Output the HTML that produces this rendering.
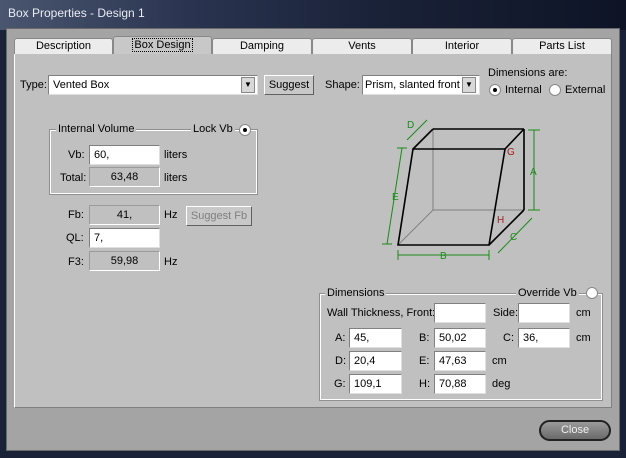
<!DOCTYPE html><html><head><style>
*{margin:0;padding:0;box-sizing:border-box}
body{width:626px;height:458px;background:#1a2238;font-family:"Liberation Sans",sans-serif;font-size:11px;color:#000;position:relative;overflow:hidden}
.a{position:absolute}
.tb{left:0;top:0;width:626px;height:30px;background:linear-gradient(90deg,#4a5670 0%,#2a3450 30%,#1a2238 60%,#0e1426 100%)}
.tt{left:8px;top:6px;color:#e8ecf4;font-size:12px}
.frame{left:6px;top:28px;width:614px;height:423px;background:#a4a4a4;border:1px solid #6a6a6a}
.panel{left:14px;top:53px;width:598px;height:355px;background:#c0c0c0;border:1px solid #fff;border-right-color:#808080;border-bottom-color:#808080}
.tab{top:38px;height:16px;background:#ececec;border:1px solid #888;border-bottom:none;border-radius:3px 3px 0 0;text-align:center;font-size:11px;line-height:14px}
.in{background:#fff;border:1px solid #808080;border-right-color:#e0e0e0;border-bottom-color:#e0e0e0;height:20px;padding-left:4px;line-height:18px}
.ro{background:#c0c0c0;border:1px solid #9a9a9a;border-right-color:#fff;border-bottom-color:#fff;height:20px;text-align:center;line-height:18px}
.btn{background:#c8c8c8;border:1px solid #fff;border-right-color:#606060;border-bottom-color:#606060;text-align:center;line-height:18px;height:20px}
.grp{border:1px solid #fff;outline:1px solid #909090}
.lb{background:#c0c0c0;padding:0 2px}
.rad{width:12px;height:12px;border-radius:50%;background:#fff;border:1px solid #888}
.dot{width:4px;height:4px;border-radius:50%;background:#000;left:3px;top:3px}
.dd{width:14px;height:16px;background:#d8d8d8;border:1px solid #888;font-size:8px;text-align:center;line-height:14px}
</style></head><body>
<div class="a tb"></div>
<div class="a tt">Box Properties - Design 1</div>
<div class="a frame"></div>
<div class="a panel"></div>
<div class="a tab" style="left:14px;width:99px">Description</div>
<div class="a tab" style="left:113px;width:99px;top:36px;height:18px;background:#c8c8c8;border-bottom:none;line-height:16px"><span style="border:1px dotted #000;padding:0 1px">Box Design</span></div>
<div class="a tab" style="left:212px;width:100px">Damping</div>
<div class="a tab" style="left:312px;width:100px">Vents</div>
<div class="a tab" style="left:412px;width:100px">Interior</div>
<div class="a tab" style="left:512px;width:100px">Parts List</div>

<div class="a" style="left:20px;top:79px">Type:</div>
<div class="a in" style="left:48px;top:75px;width:210px">Vented Box</div>
<div class="a dd" style="left:241px;top:77px">▼</div>
<div class="a btn" style="left:264px;top:75px;width:50px">Suggest</div>
<div class="a" style="left:325px;top:79px">Shape:</div>
<div class="a in" style="left:362px;top:75px;width:118px;padding-left:2px">Prism, slanted front</div>
<div class="a dd" style="left:462px;top:77px">▼</div>
<div class="a" style="left:488px;top:67px">Dimensions are:</div>
<div class="a rad" style="left:489px;top:84px"><div class="a dot"></div></div>
<div class="a" style="left:505px;top:84px">Internal</div>
<div class="a rad" style="left:549px;top:84px"></div>
<div class="a" style="left:565px;top:84px">External</div>

<div class="a grp" style="left:50px;top:130px;width:207px;height:64px"></div>
<div class="a lb" style="left:56px;top:123px">Internal Volume</div>
<div class="a lb" style="left:191px;top:123px">Lock Vb</div>
<div class="a rad" style="left:239px;top:124px"><div class="a dot"></div></div>
<div class="a" style="left:68px;top:149px">Vb:</div>
<div class="a in" style="left:89px;top:145px;width:71px">60,</div>
<div class="a" style="left:164px;top:149px">liters</div>
<div class="a" style="left:60px;top:172px">Total:</div>
<div class="a ro" style="left:89px;top:167px;width:71px">63,48</div>
<div class="a" style="left:164px;top:172px">liters</div>
<div class="a" style="left:68px;top:209px">Fb:</div>
<div class="a ro" style="left:89px;top:205px;width:71px">41,</div>
<div class="a" style="left:164px;top:209px">Hz</div>
<div class="a btn" style="left:186px;top:206px;width:66px;color:#808080">Suggest Fb</div>
<div class="a" style="left:66px;top:232px">QL:</div>
<div class="a in" style="left:89px;top:228px;width:71px">7,</div>
<div class="a" style="left:68px;top:256px">F3:</div>
<div class="a ro" style="left:89px;top:251px;width:71px">59,98</div>
<div class="a" style="left:164px;top:256px">Hz</div>

<svg class="a" style="left:370px;top:110px" width="180" height="160" viewBox="0 0 180 160">
<g fill="none" stroke="#808080" stroke-width="1"><line x1="63" y1="19" x2="63" y2="100"/><line x1="63" y1="100" x2="154" y2="100"/><line x1="63" y1="100" x2="28" y2="135"/></g>
<g fill="none" stroke="#000" stroke-width="1.6"><polygon points="43,39 135,39 119,135 28,135"/><line x1="63" y1="19" x2="154" y2="19"/><line x1="63" y1="19" x2="43" y2="39"/><line x1="154" y1="19" x2="135" y2="39"/><line x1="154" y1="19" x2="154" y2="100"/><line x1="154" y1="100" x2="119" y2="135"/></g>
<g stroke="#1a8a1a" stroke-width="1" fill="none"><line x1="37" y1="30" x2="57" y2="10"/><line x1="32" y1="38" x2="17" y2="134"/><line x1="164" y1="20" x2="164" y2="100"/><line x1="28" y1="145" x2="119" y2="145"/><line x1="128" y1="143" x2="162" y2="108"/>
<line x1="158" y1="20" x2="170" y2="20"/><line x1="158" y1="100" x2="170" y2="100"/><line x1="28" y1="140" x2="28" y2="150"/><line x1="119" y1="140" x2="119" y2="150"/><line x1="27" y1="38" x2="37" y2="38"/><line x1="12" y1="134" x2="22" y2="134"/></g>
<g fill="#1a8a1a" font-size="10" font-family="Liberation Sans"><text x="37" y="18">D</text><text x="22" y="90">E</text><text x="160" y="65">A</text><text x="70" y="149">B</text><text x="140" y="130">C</text></g>
<g fill="#a02020" font-size="10" font-family="Liberation Sans"><text x="137" y="45">G</text><text x="127" y="113">H</text></g>
</svg>

<div class="a grp" style="left:320px;top:294px;width:282px;height:106px"></div>
<div class="a lb" style="left:325px;top:287px">Dimensions</div>
<div class="a lb" style="left:516px;top:287px">Override Vb</div>
<div class="a rad" style="left:586px;top:287px"></div>
<div class="a" style="left:327px;top:307px">Wall Thickness, Front:</div>
<div class="a in" style="left:434px;top:303px;width:52px"></div>
<div class="a" style="left:493px;top:307px">Side:</div>
<div class="a in" style="left:518px;top:303px;width:52px"></div>
<div class="a" style="left:576px;top:307px">cm</div>
<div class="a" style="left:335px;top:332px">A:</div><div class="a in" style="left:349px;top:328px;width:53px">45,</div>
<div class="a" style="left:419px;top:332px">B:</div><div class="a in" style="left:434px;top:328px;width:52px">50,02</div>
<div class="a" style="left:503px;top:332px">C:</div><div class="a in" style="left:518px;top:328px;width:52px">36,</div>
<div class="a" style="left:576px;top:332px">cm</div>
<div class="a" style="left:335px;top:355px">D:</div><div class="a in" style="left:349px;top:351px;width:53px">20,4</div>
<div class="a" style="left:419px;top:355px">E:</div><div class="a in" style="left:434px;top:351px;width:52px">47,63</div>
<div class="a" style="left:492px;top:355px">cm</div>
<div class="a" style="left:334px;top:378px">G:</div><div class="a in" style="left:349px;top:374px;width:53px">109,1</div>
<div class="a" style="left:419px;top:378px">H:</div><div class="a in" style="left:434px;top:374px;width:52px">70,88</div>
<div class="a" style="left:492px;top:378px">deg</div>

<div class="a" style="left:539px;top:420px;width:72px;height:21px;border-radius:11px;background:linear-gradient(#9a9a9a,#6a6a6a);border:2px solid #222;color:#f0f0f0;text-align:center;line-height:17px;font-size:11px">Close</div>
</body></html>
